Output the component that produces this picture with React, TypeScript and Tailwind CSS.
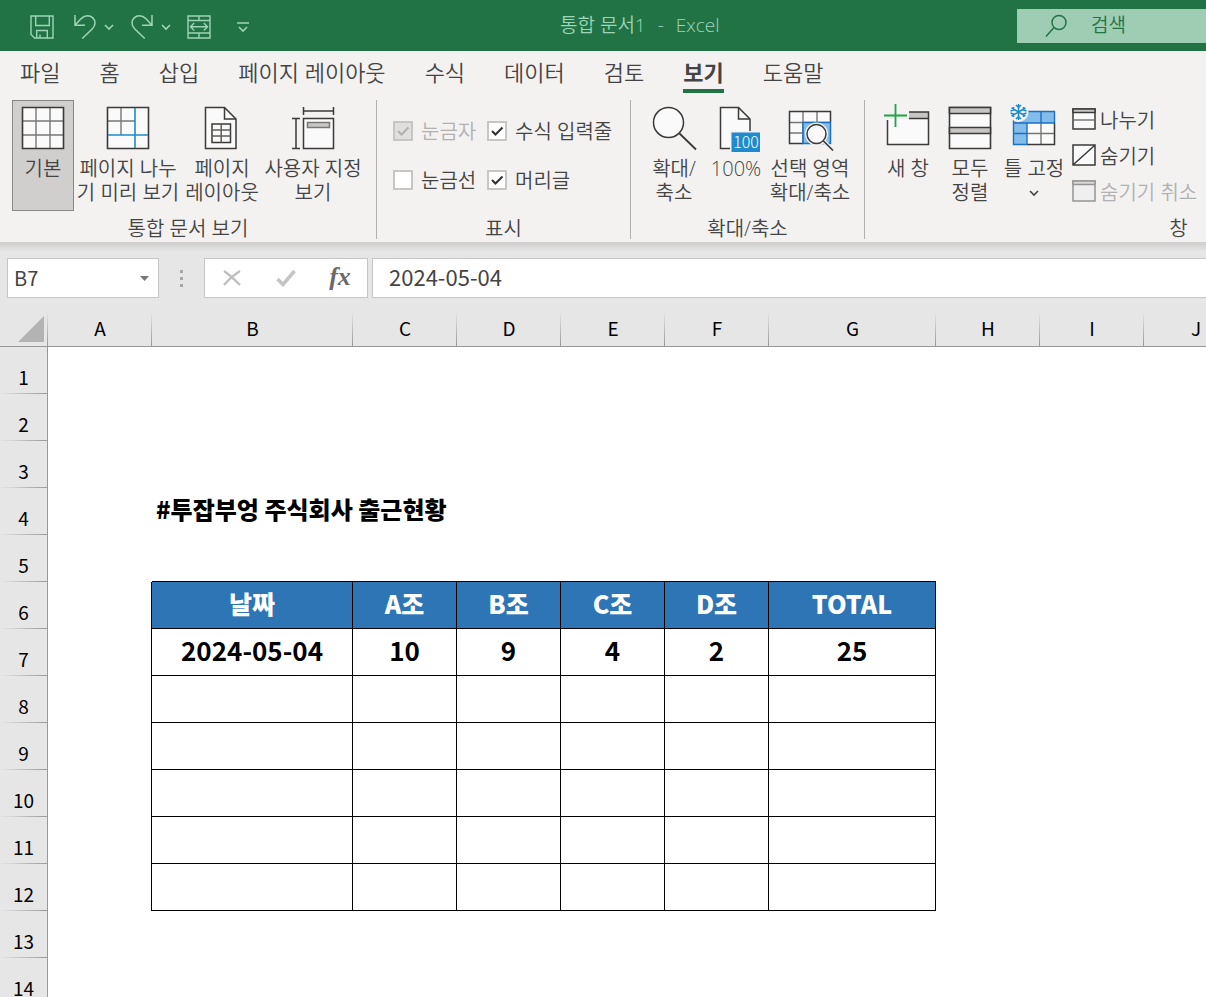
import React from "react";

interface RibbonButtonProps {
  icon: React.ReactNode;
  lines: React.ReactNode[];
  width: string;
  active?: boolean;
}

interface CheckProps {
  id: string;
  label: string;
  checked?: boolean;
  disabled?: boolean;
}

const tabs = [
  "파일",
  "홈",
  "삽입",
  "페이지 레이아웃",
  "수식",
  "데이터",
  "검토",
  "보기",
  "도움말",
];

const columns = [
  { name: "A", width: "w-[104px]" },
  { name: "B", width: "w-[201px]" },
  { name: "C", width: "w-[104px]" },
  { name: "D", width: "w-[104px]" },
  { name: "E", width: "w-[104px]" },
  { name: "F", width: "w-[104px]" },
  { name: "G", width: "w-[167px]" },
  { name: "H", width: "w-[104px]" },
  { name: "I", width: "w-[104px]" },
  { name: "J", width: "w-[104px]" },
];

const rowNumbers = [1, 2, 3, 4, 5, 6, 7, 8, 9, 10, 11, 12, 13, 14];

// Cell contents of columns B to G
const cells: Record<number, string[]> = {
  6: ["날짜", "A조", "B조", "C조", "D조", "TOTAL"],
  7: ["2024-05-04", "10", "9", "4", "2", "25"],
};

const dark = "#3b3a39";

const Chevron = ({ className = "" }: { className?: string }) => (
  <svg
    width="10"
    height="8"
    viewBox="0 0 10 8"
    fill="none"
    stroke="currentColor"
    strokeWidth="1.6"
    className={className}
  >
    <path d="M1 2l4 4 4-4" />
  </svg>
);

const SaveIcon = () => (
  <svg width="24" height="24" viewBox="0 0 24 24" fill="none" stroke="currentColor" strokeWidth="1.4">
    <path d="M1 1h22v22H4.500L1 19.500zM5.700 1v9.500h13.600V1M6.700 23v-7.500h10.600V23M10 19.500V23" />
  </svg>
);

const UndoIcon = ({ className = "" }: { className?: string }) => (
  <svg
    width="22"
    height="24"
    viewBox="0 0 22 24"
    fill="none"
    stroke="currentColor"
    strokeWidth="1.5"
    className={className}
  >
    <path d="M1 0v10.300h10M1 10.300L7.200 3.600C9.500 1.300 11.400.8 13.500.8c4.200 0 7.500 3.200 7.500 7.200 0 2.400-.9 4-2.600 5.700L8.300 23.500" />
  </svg>
);

const MergeIcon = () => (
  <svg width="24" height="24" viewBox="0 0 24 24" fill="none" stroke="currentColor" strokeWidth="1.4">
    <path d="M1 1h22v22H1zM1 5.500h22M1 18h22M12 1v4.500M12 18v5M3.800 11.700h16.400M7.200 8l-3.700 3.700 3.700 3.700M16.800 8l3.700 3.700-3.700 3.700" />
  </svg>
);

const GridIcon = () => (
  <svg width="44" height="44" viewBox="0 0 44 44" fill="#fafafa">
    <path d="M1.500 1.500h41v41h-41z" />
    <path d="M15 1v42M29 1v42M1 15h42M1 29h42" stroke="#797774" strokeWidth="1.400" />
    <path d="M1.500 1.500h41v41h-41z" fill="none" stroke={dark} strokeWidth="1.600" />
  </svg>
);

const PageBreakIcon = () => (
  <svg width="44" height="44" viewBox="0 0 44 44" fill="none">
    <path d="M1.500 1.500h41v41h-41z" fill="#fafafa" />
    <path d="M15 1v28M1 15h28" stroke="#797774" strokeWidth="1.400" />
    <path d="M1.500 1.500h41v41h-41z" stroke={dark} strokeWidth="1.600" />
    <path d="M29 2v40M2 29h40" stroke="#1e8bcd" strokeWidth="1.600" />
  </svg>
);

const PageLayoutIcon = () => (
  <svg width="44" height="44" viewBox="1 0 44 44" fill="none" stroke={dark} strokeWidth="1.500">
    <path d="M6.500 1.500h19L37 13v29.500H6.500z" fill="#fafafa" />
    <path d="M25.500 1.500V13H37" />
    <path d="M13 18h18.500v18.500H13z" />
    <path d="M22.200 18v18.500M13 24h18.500M13 30h18.500" stroke="#605e5c" />
  </svg>
);

const CustomViewIcon = () => (
  <svg width="44" height="44" viewBox="0 0 44 44" fill="none" stroke={dark} strokeWidth="1.500">
    <path d="M12.500 12.500h30v30h-30z" fill="#fafafa" />
    <path d="M12.500 1v8M42.500 1v8M12.500 5h30M1 12.500h8M1 42.500h8M5 12.500v30" />
    <path d="M16.500 16.500h22v5h-22z" fill="#c8c6c4" stroke="#797774" />
  </svg>
);

const ZoomIcon = () => (
  <svg width="44" height="44" viewBox="0 0 44 44" fill="none" stroke={dark} strokeWidth="1.500">
    <circle cx="16.500" cy="16.500" r="15" fill="#fafafa" />
    <path d="M27 27l17 16.500" strokeWidth="1.800" />
  </svg>
);

const HundredIcon = () => (
  <svg width="44" height="48" viewBox="-1 0 44 48" fill="none">
    <path d="M5.500 1.500h18L35 13v29.500H5.500z" fill="#fafafa" stroke={dark} strokeWidth="1.500" />
    <path d="M23.500 1.500V13H35" stroke={dark} strokeWidth="1.500" />
    <path d="M15 25h32v22H15z" fill="#f3f2f1" />
    <path d="M16.500 26.500H45V46H16.500z" fill="#1e8bcd" />
    <text
      x="31"
      y="42"
      textAnchor="middle"
      fill="#fff"
      fontSize="16"
      fontWeight="300"
      fontFamily="Noto Sans CJK KR, sans-serif"
    >
      100
    </text>
  </svg>
);

const ZoomSelectionIcon = () => (
  <svg width="46" height="46" viewBox="-1 0 46 46" fill="none">
    <path d="M1.500 5.500h41v32h-41z" fill="#fafafa" />
    <path d="M15 5v32M29 5v11M1 16.500h42M1 27h14" stroke="#797774" strokeWidth="1.400" />
    <path d="M42.500 16V5.500h-41v32H15" stroke={dark} strokeWidth="1.500" />
    <path d="M15 16.500h27.500v21H15z" fill="#83bdec" stroke="#1e6fbf" strokeWidth="1.500" />
    <circle cx="28.500" cy="28" r="11.500" fill="#f3f2f1" />
    <circle cx="28.500" cy="28" r="9.500" fill="#fafafa" stroke={dark} strokeWidth="1.500" />
    <path d="M35.500 35l9.500 9.500" stroke="#f3f2f1" strokeWidth="4" />
    <path d="M35 34.500l10 10" stroke={dark} strokeWidth="1.700" />
  </svg>
);

const NewWindowIcon = () => (
  <svg width="46" height="44" viewBox="1 0 46 44" fill="none">
    <path d="M3.500 13v25.500h41V6H25v7z" fill="#fafafa" />
    <path d="M25 6h19.500v6H25z" fill="#c8c6c4" />
    <path d="M3.500 14v24.500h41V6H25M25 12.500h19.500" stroke={dark} strokeWidth="1.500" />
    <path d="M11.500-2v23M0 9.500h23" stroke="#1ea446" strokeWidth="1.800" />
  </svg>
);

const ArrangeIcon = () => (
  <svg width="44" height="44" viewBox="0 0 44 44" stroke={dark} strokeWidth="1.600">
    <path d="M1.500 1.500h41v41h-41z" fill="#fafafa" />
    <path d="M1.500 1.500h41v6h-41zM1.500 21.500h41v6h-41z" fill="#c8c6c4" />
  </svg>
);

const FreezeIcon = () => (
  <svg width="46" height="44" viewBox="1 0 46 44" fill="none">
    <path d="M3.500 5.500h41v33h-41z" fill="#fafafa" />
    <path d="M3.500 5.500h41V17H17v21.500H3.500z" fill="#83bdec" />
    <path d="M31 17v21M17 27.500h27" stroke="#797774" strokeWidth="1.400" />
    <path d="M17 38.500h27.500V17" stroke={dark} strokeWidth="1.500" />
    <path d="M44.500 17V5.500h-41v33H17V17h27.500M31 5.500V17M3.500 27.500H17M3.500 17H17" stroke="#1e6fbf" strokeWidth="1.400" />
    <circle cx="8.500" cy="6" r="10" fill="#f3f2f1" />
    <path d="M8.500-2v16M1.500 2l14 8M15.500 2l-14 8M6-1l2.500 2.500L11-1M6 13l2.500-2.500L11 13M.500 5l3-1V1M16.500 5l-3-1V1M.500 7l3 1v3M16.500 7l-3 1v3" stroke="#1e8bcd" strokeWidth="1.500" />
  </svg>
);

const SplitIcon = () => (
  <svg width="24" height="22" viewBox="0 0 24 22" fill="none" stroke={dark} strokeWidth="1.500">
    <path d="M1 1h22v20H1z" fill="#fafafa" />
    <path d="M1 1h22v3.500H1z" fill="#c8c6c4" />
    <path d="M1 12h22" stroke="#797774" />
  </svg>
);

const HideIcon = () => (
  <svg width="24" height="22" viewBox="0 0 24 22" fill="#fafafa" stroke={dark} strokeWidth="1.500">
    <path d="M1 1h22v20H1zM2 20L22 2" />
  </svg>
);

const UnhideIcon = () => (
  <svg width="24" height="22" viewBox="0 0 24 22" stroke="#979593" strokeWidth="1.500">
    <path d="M1 1h22v20H1z" fill="#efefef" />
    <path d="M1 1h22v3.500H1z" fill="#d8d8d8" />
  </svg>
);

const RibbonButton: React.FC<RibbonButtonProps> = ({
  icon,
  lines,
  width,
  active = false,
}) => (
  <button
    type="button"
    className={`flex h-[111px] shrink-0 flex-col items-center gap-[7px] whitespace-nowrap border pt-[5px] leading-6 ${width} ${
      active ? "border-[#8a8886] bg-[#d0cfce]" : "border-transparent"
    }`}
  >
    <span className="flex h-11 justify-center overflow-visible [&>svg]:shrink-0 [&>svg]:overflow-visible">
      {icon}
    </span>
    <span className="flex flex-col items-center">
      {lines.map((line, i) => (
        <span key={i} className="flex h-6 items-center">
          {line}
        </span>
      ))}
    </span>
  </button>
);

const SmallButton = ({
  icon,
  label,
  disabled = false,
}: {
  icon: React.ReactNode;
  label: string;
  disabled?: boolean;
}) => (
  <button
    type="button"
    disabled={disabled}
    className="flex h-9 items-center gap-1 whitespace-nowrap disabled:text-[#b1b1b1]"
  >
    {icon}
    <span className="pt-1 leading-6">{label}</span>
  </button>
);

const RibbonGroup = ({
  title,
  className,
  children,
}: {
  title: string;
  className: string;
  children: React.ReactNode;
}) => (
  <section className={`flex shrink-0 flex-col border-r border-[#b3b0ad] ${className}`}>
    <div className="flex h-[111px]">{children}</div>
    <div className="mt-2 text-center leading-5">{title}</div>
  </section>
);

const Check: React.FC<CheckProps> = ({
  id,
  label,
  checked = false,
  disabled = false,
}) => (
  <div className="flex h-6 items-center gap-2">
    <span className="grid">
      <input
        id={id}
        type="checkbox"
        defaultChecked={checked}
        disabled={disabled}
        className="peer size-5 appearance-none border-2 border-[#c8c6c4] bg-white [grid-area:1/1] disabled:bg-[#e1dfdd]"
      />
      <svg
        viewBox="0 0 20 20"
        fill="none"
        stroke="currentColor"
        strokeWidth="2"
        className="pointer-events-none hidden size-5 text-[#323130] [grid-area:1/1] peer-checked:block peer-disabled:text-[#b1b1b1]"
      >
        <path d="M5 10l3.500 3.500L15.500 6.500" />
      </svg>
    </span>
    <label
      htmlFor={id}
      className={`pt-0.5 leading-6 whitespace-nowrap ${disabled ? "text-[#b1b1b1]" : ""}`}
    >
      {label}
    </label>
  </div>
);

const TitleBar = () => (
  <header className="flex h-[51px] items-center bg-[#217346] font-[350] text-[#9fd5b7]">
    <div className="flex w-[560px] shrink-0 items-center pt-0.5 pl-[30px]">
      <button type="button" aria-label="저장" className="mr-5">
        <SaveIcon />
      </button>
      <button type="button" aria-label="실행 취소" className="mr-2">
        <UndoIcon />
      </button>
      <Chevron className="mr-[17px]" />
      <button type="button" aria-label="다시 실행" className="mr-2">
        <UndoIcon className="-scale-x-100" />
      </button>
      <Chevron className="mr-4" />
      <button type="button" aria-label="병합" className="mr-[26px]">
        <MergeIcon />
      </button>
      <button type="button" aria-label="사용자 지정">
        <svg width="12" height="12" viewBox="0 0 12 12" fill="none" stroke="currentColor" strokeWidth="1.6">
          <path d="M0 2h12M2 6l4 4 4-4" />
        </svg>
      </button>
    </div>
    <h1 className="flex gap-3 text-[19px] font-[350]">
      <span>통합 문서1</span>
      <span>-</span>
      <span>Excel</span>
    </h1>
    <div className="ml-auto flex h-[34px] w-[189px] shrink-0 items-center gap-6 bg-[#9fcdb3] pl-7 text-[#217346]">
      <svg
        width="22"
        height="24"
        viewBox="0 0 22 24"
        fill="none"
        stroke="currentColor"
        strokeWidth="1.5"
        className="shrink-0"
      >
        <circle cx="14" cy="8.500" r="7" />
        <path d="M9 13.500L1 22.500" />
      </svg>
      <input
        type="search"
        aria-label="검색"
        placeholder="검색"
        className="w-full min-w-0 bg-transparent text-[19px] outline-none placeholder:text-[#217346]"
      />
    </div>
  </header>
);

const Ribbon = () => (
  <div className="bg-[#f3f2f1] font-[350] text-[#444]">
    <nav className="flex gap-[39px] pl-5 text-[22px]">
      {tabs.map((tab) => (
        <a
          key={tab}
          href="#"
          className={`flex h-[42px] shrink-0 items-center border-b-4 pt-1 whitespace-nowrap ${
            tab === "보기" ? "border-[#217346] font-bold" : "border-transparent"
          }`}
        >
          {tab}
        </a>
      ))}
    </nav>
    <div className="flex overflow-hidden pt-[7px] pb-[3px] text-[20px]">
      <RibbonGroup title="통합 문서 보기" className="w-[377px] [&>div:first-child]:pl-3">
        <RibbonButton active width="mr-0.5 w-[62px]" icon={<GridIcon />} lines={["기본"]} />
        <RibbonButton width="w-[104px]" icon={<PageBreakIcon />} lines={["페이지 나누", "기 미리 보기"]} />
        <RibbonButton width="w-[84px]" icon={<PageLayoutIcon />} lines={["페이지", "레이아웃"]} />
        <RibbonButton width="w-[98px]" icon={<CustomViewIcon />} lines={["사용자 지정", "보기"]} />
      </RibbonGroup>
      <RibbonGroup title="표시" className="w-[254px]">
        <div className="grid grid-cols-[94px_auto] content-start gap-y-[25px] pt-[19px] pl-4">
          <Check id="ruler" label="눈금자" checked disabled />
          <Check id="formula-bar" label="수식 입력줄" checked />
          <Check id="gridlines" label="눈금선" />
          <Check id="headings" label="머리글" checked />
        </div>
      </RibbonGroup>
      <RibbonGroup title="확대/축소" className="w-[234px] [&>div:first-child]:pl-3">
        <RibbonButton width="w-[62px]" icon={<ZoomIcon />} lines={["확대/", "축소"]} />
        <RibbonButton width="w-[62px]" icon={<HundredIcon />} lines={["100%"]} />
        <RibbonButton width="w-[86px]" icon={<ZoomSelectionIcon />} lines={["선택 영역", "확대/축소"]} />
      </RibbonGroup>
      <RibbonGroup title="창" className="w-[628px] [&>div:first-child]:pl-3">
        <RibbonButton width="w-[62px]" icon={<NewWindowIcon />} lines={["새 창"]} />
        <RibbonButton width="w-[62px]" icon={<ArrangeIcon />} lines={["모두", "정렬"]} />
        <RibbonButton width="w-[66px]" icon={<FreezeIcon />} lines={["틀 고정", <Chevron />]} />
        <div className="flex flex-col items-start pt-px pl-[5px]">
          <SmallButton icon={<SplitIcon />} label="나누기" />
          <SmallButton icon={<HideIcon />} label="숨기기" />
          <SmallButton icon={<UnhideIcon />} label="숨기기 취소" disabled />
        </div>
      </RibbonGroup>
    </div>
  </div>
);

const FormulaBar = () => (
  <div className="bg-[#e6e6e6] bg-[linear-gradient(#cdcdcd,#e6e6e6)] bg-[length:100%_10px] bg-no-repeat pt-4 pb-[13px]">
    <div className="flex h-10 pl-[7px] text-[#444]">
      <div className="flex w-[152px] shrink-0 items-center border border-[#c6c6c6] bg-white">
        <input
          aria-label="이름 상자"
          defaultValue="B7"
          className="w-full min-w-0 pl-1.5 text-[20px] outline-none"
        />
        <button type="button" aria-label="이름 목록" className="mr-[9px] shrink-0">
          <svg width="9" height="5" viewBox="0 0 9 5" fill="#777">
            <path d="M0 0h9L4.500 5z" />
          </svg>
        </button>
      </div>
      <div className="flex w-[45px] shrink-0 flex-col items-center justify-center gap-1">
        <span className="size-[3px] bg-[#a6a6a6]" />
        <span className="size-[3px] bg-[#a6a6a6]" />
        <span className="size-[3px] bg-[#a6a6a6]" />
      </div>
      <div className="mr-1 grid w-[164px] shrink-0 grid-cols-3 border border-[#c6c6c6] bg-white">
        <button type="button" aria-label="취소" className="flex items-center justify-center">
          <svg width="18" height="18" viewBox="0 0 18 18" fill="none" stroke="#bdbdbd" strokeWidth="2.200">
            <path d="M1 2c6 4 11 9 16 14M17 2C11 6 6 10 1 16" />
          </svg>
        </button>
        <button type="button" aria-label="입력" className="flex items-center justify-center">
          <svg width="20" height="18" viewBox="0 0 20 18" fill="none" stroke="#c4c4c4" strokeWidth="3.500">
            <path d="M1.500 10l5.500 5.500L18.500 2" />
          </svg>
        </button>
        <button
          type="button"
          className="pb-0.5 font-['Liberation_Serif',serif] text-[26px] leading-8 font-bold text-[#6a6a6a] italic"
        >
          fx
        </button>
      </div>
      <input
        aria-label="수식 입력줄"
        defaultValue="2024-05-04"
        className="min-w-0 flex-1 border border-r-0 border-[#c6c6c6] bg-white pb-1 pl-4 text-[22px] outline-none"
      />
    </div>
  </div>
);

const cellStyle = (row: number, col: number) => {
  // col 0 is A; the bordered range is B6:G12
  const inRange = row >= 6 && row <= 12 && col >= 1 && col <= 6;
  const right = inRange || (row >= 6 && row <= 12 && col === 0);
  const bottom = inRange || (row === 5 && col >= 1 && col <= 6);
  return [
    right ? "border-r border-r-black" : "",
    bottom ? "border-b border-b-black" : "",
    inRange && row === 6 ? "bg-[#2e75b6] text-[25px] font-black text-white" : "",
    inRange && row > 6 ? "text-[26px] font-bold" : "",
  ].join(" ");
};

const Sheet = () => (
  <table className="w-[1248px] table-fixed border-separate border-spacing-0 bg-white text-black">
    <thead>
      <tr className="h-9 bg-[#e6e6e6] text-[19px]">
        <th className="w-12 border-b border-b-[#999] bg-[linear-gradient(to_bottom,#e6e6e6,#999)] bg-[length:1px_100%] bg-right bg-no-repeat p-0">
          <svg width="26" height="26" viewBox="0 0 26 26" fill="#b3b3b3" className="ml-[18px]">
            <path d="M26 0v26H0z" />
          </svg>
        </th>
        {columns.map((column) => (
          <th
            key={column.name}
            scope="col"
            className={`border-b border-b-[#999] bg-[linear-gradient(to_bottom,#e6e6e6,#999)] bg-[length:1px_100%] bg-right bg-no-repeat p-0 pb-0.5 leading-7 font-normal ${column.width}`}
          >
            {column.name}
          </th>
        ))}
      </tr>
    </thead>
    <tbody>
      {rowNumbers.map((row) => (
        <tr key={row} className="h-[47px]">
          <th
            scope="row"
            className="border-r border-r-[#999] bg-[#e6e6e6] bg-[linear-gradient(to_right,#e6e6e6,#999)] bg-[length:100%_1px] bg-bottom bg-no-repeat p-0 pb-[3px] align-bottom text-[19px] leading-7 font-normal"
          >
            {row}
          </th>
          {row === 4 ? (
            <>
              <td className="p-0" />
              <td
                colSpan={9}
                className="p-0 pb-1.5 pl-1 text-[24px] leading-8 font-black"
              >
                #투잡부엉 주식회사 출근현황
              </td>
            </>
          ) : (
            columns.map((column, col) => (
              <td
                key={column.name}
                className={`p-0 pb-1 text-center leading-8 ${cellStyle(row, col)}`}
              >
                {cells[row]?.[col - 1]}
              </td>
            ))
          )}
        </tr>
      ))}
    </tbody>
  </table>
);

const App = () => (
  <main className="h-screen overflow-hidden bg-white font-['Open_Sans','Noto_Sans_CJK_KR',sans-serif]">
    <TitleBar />
    <Ribbon />
    <div className="font-['Noto_Sans_CJK_KR',sans-serif]">
      <FormulaBar />
      <Sheet />
    </div>
  </main>
);

export default App;
